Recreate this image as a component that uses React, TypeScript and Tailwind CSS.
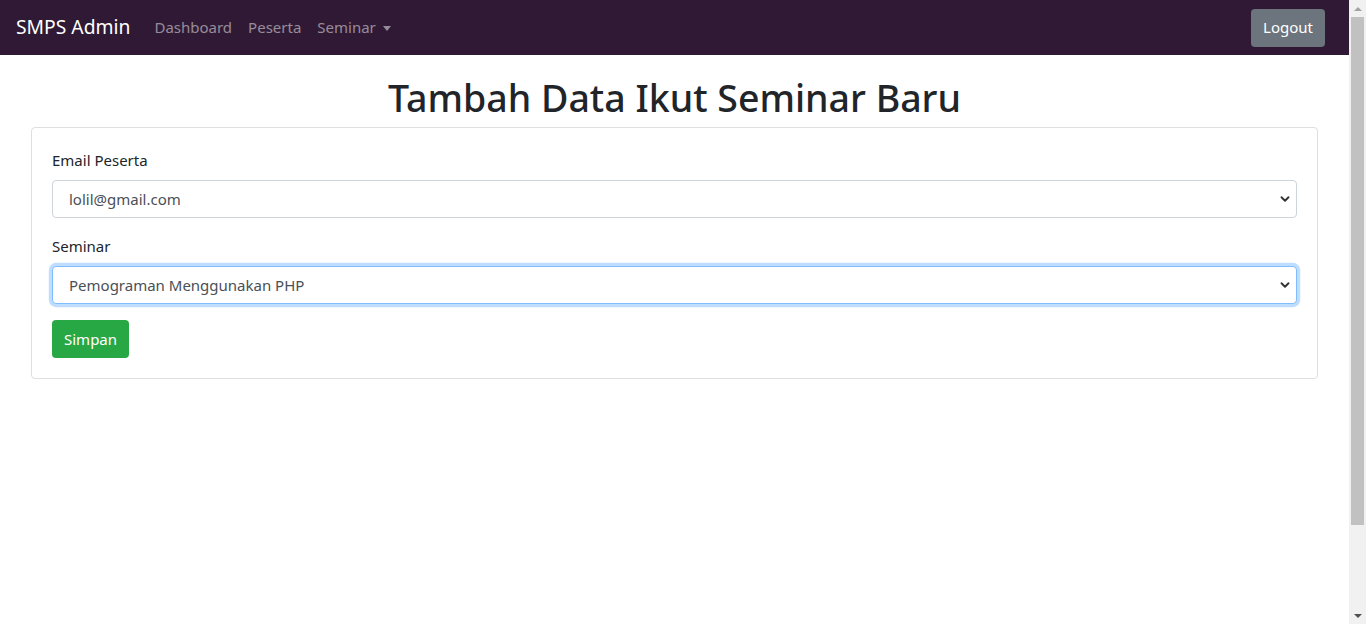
import { ChevronDown } from "lucide-react";

const font = "font-['Segoe_UI','Noto_Sans',sans-serif]";

function FakeSelect({ value, focused }: { value: string; focused?: boolean }) {
  return (
    <div className="relative">
      <select
        defaultValue={value}
        className={`w-full h-[38px] appearance-none rounded-[4px] border bg-white pl-[16px] pr-8 text-[15px] text-[#495057] outline-none ${
          focused ? "border-[#80bdff] shadow-[0_0_0_3.2px_rgba(0,123,255,0.25)]" : "border-[#ced4da]"
        }`}
      >
        <option>{value}</option>
      </select>
      <ChevronDown className="pointer-events-none absolute right-[5px] top-[12px] w-[14px] h-[14px] text-[#333]" strokeWidth={3.2} />
    </div>
  );
}

export default function App() {
  return (
    <div className={`flex h-[624px] overflow-hidden bg-white ${font}`}>
      <div className="flex-1 min-w-0">
        {/* Navbar */}
        <nav className="h-[55px] bg-[#301934] flex items-center justify-between pl-4 pr-[24px]">
          <div className="flex items-center">
            <span className="text-white text-[19.3px] mr-[24px]">SMPS Admin</span>
            <div className="flex items-center gap-[16px] text-[15px] text-white/50">
              <span>Dashboard</span>
              <span>Peserta</span>
              <span className="flex items-center">
                Seminar
                <span className="ml-[7px] mt-[2px] border-x-[4.5px] border-x-transparent border-t-[5px] border-t-white/50" />
              </span>
            </div>
          </div>
          <button className="h-[38px] px-[12px] rounded-[4px] bg-[#6c757d] text-white text-[15px]">Logout</button>
        </nav>

        <h1 className="text-center text-[37.5px] font-medium text-[#212529] leading-[1.2] mt-[20px] mb-[7px]">
          Tambah Data Ikut Seminar Baru
        </h1>

        <div className="mx-[31px] rounded-[4px] border border-[#dfdfdf] p-[20px]">
          <div className="mb-[16px]">
            <label className="block text-[15px] text-[#212529] leading-[24px] mb-[8px]">Email Peserta</label>
            <FakeSelect value="lolil@gmail.com" />
          </div>
          <div className="mb-[16px]">
            <label className="block text-[15px] text-[#212529] leading-[24px] mb-[8px]">Seminar</label>
            <FakeSelect value="Pemograman Menggunakan PHP" focused />
          </div>
          <button className="h-[38px] px-[12px] rounded-[4px] bg-[#28a745] text-white text-[15px]">Simpan</button>
        </div>
      </div>

      {/* scrollbar */}
      <div className="w-[17px] bg-[#f1f1f1] flex flex-col items-center">
        <div className="h-[17px] flex items-center justify-center">
          <span className="border-x-[4px] border-x-transparent border-b-[4px] border-b-[#a3a3a3]" />
        </div>
        <div className="w-[13px] h-[508px] bg-[#c1c1c1]" />
        <div className="flex-1" />
        <div className="h-[17px] flex items-center justify-center">
          <span className="border-x-[4px] border-x-transparent border-t-[4px] border-t-[#505050]" />
        </div>
      </div>
    </div>
  );
}
